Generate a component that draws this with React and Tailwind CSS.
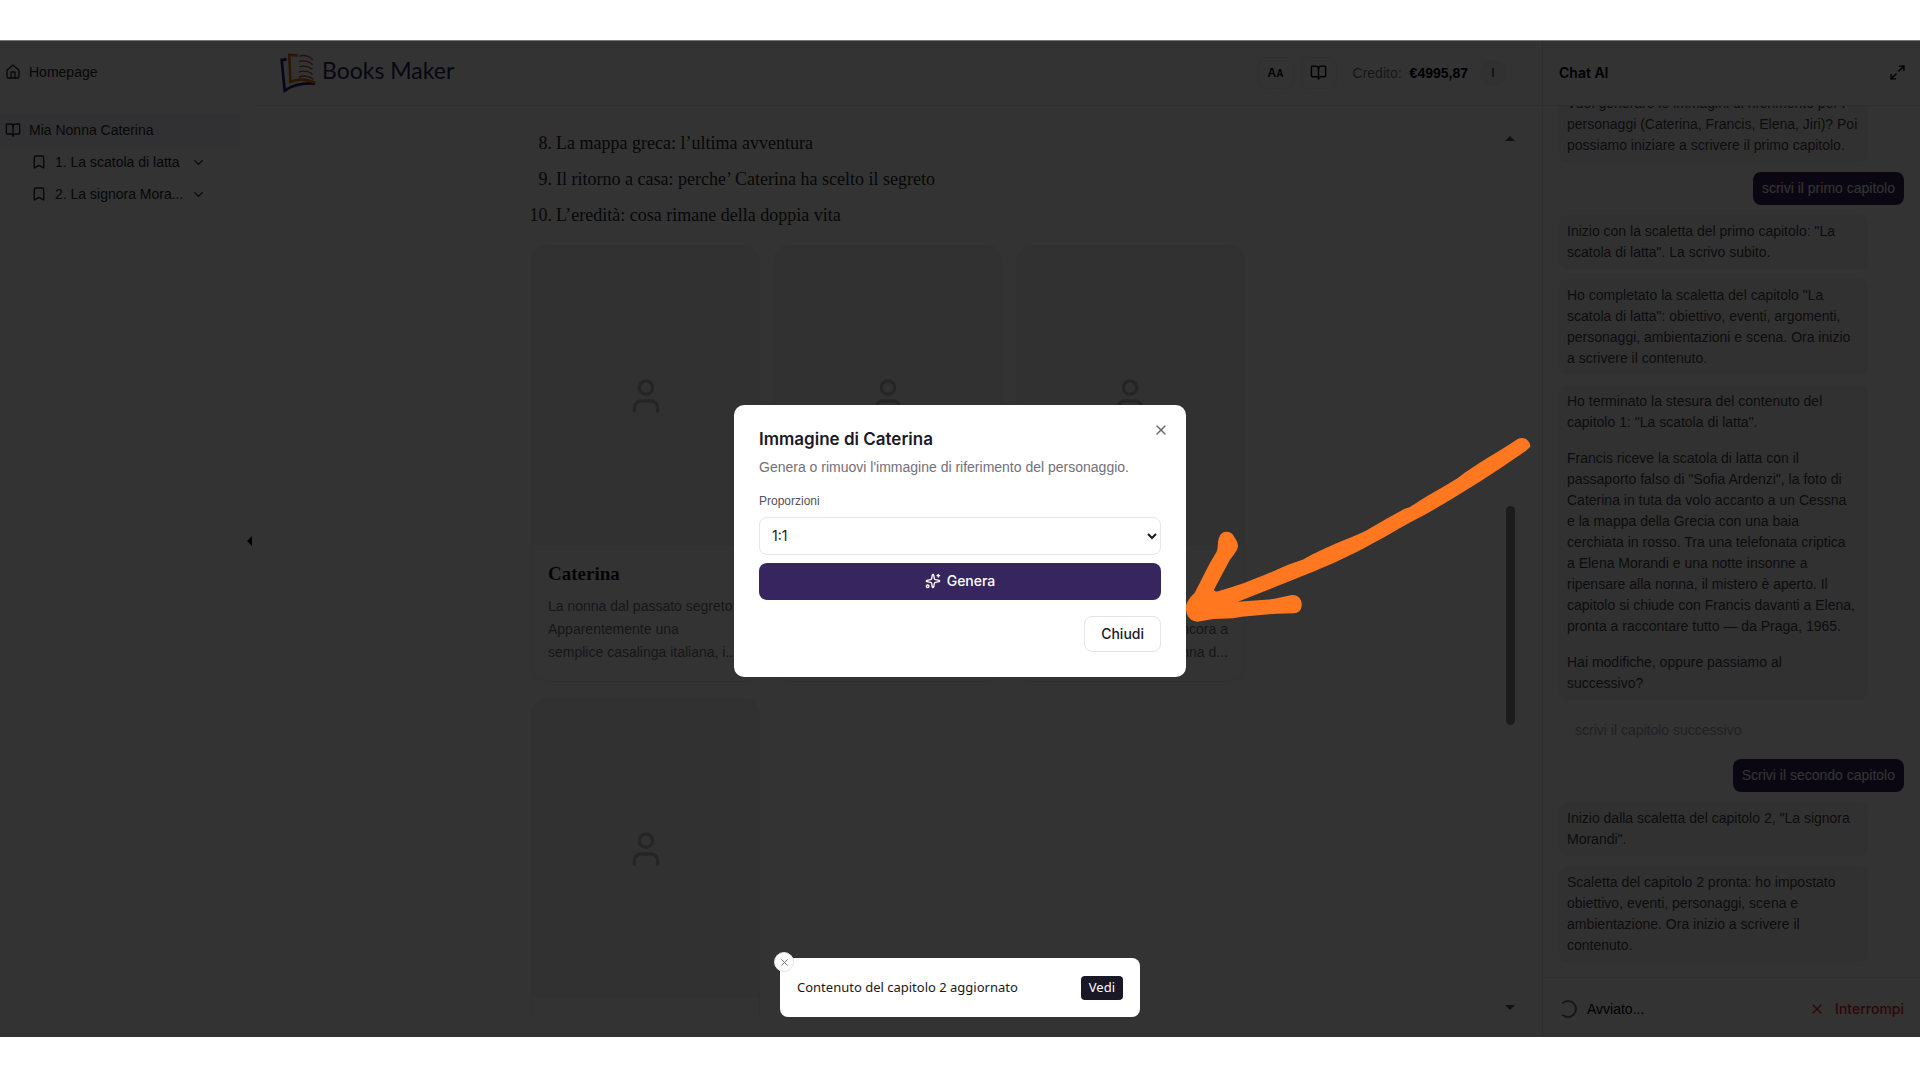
import {
  BookOpen,
  Bookmark,
  ChevronDown,
  House,
  Maximize2,
  Sparkles,
  User,
  X,
} from "lucide-react";

const chapters = ["1. La scatola di latta", "2. La signora Mora..."];

const outline = [
  { n: 8, title: "La mappa greca: l’ultima avventura" },
  { n: 9, title: "Il ritorno a casa: perche’ Caterina ha scelto il segreto" },
  { n: 10, title: "L’eredità: cosa rimane della doppia vita" },
];

const characters = [
  {
    name: "Caterina",
    text: "La nonna dal passato segreto.\nApparentemente una\nsemplice casalinga italiana, i...",
  },
  { name: "", text: "" },
  { name: "", text: "\nancora a\nnonna d...", right: true },
  { name: "", text: "" },
];

const messages = [
  {
    from: "ai",
    parts: [
      "Vuoi generare le immagini di riferimento per i\npersonaggi (Caterina, Francis, Elena, Jiri)? Poi\npossiamo iniziare a scrivere il primo capitolo.",
    ],
  },
  { from: "user", parts: ["scrivi il primo capitolo"] },
  {
    from: "ai",
    parts: ['Inizio con la scaletta del primo capitolo: "La\nscatola di latta". La scrivo subito.'],
  },
  {
    from: "ai",
    parts: [
      'Ho completato la scaletta del capitolo "La\nscatola di latta": obiettivo, eventi, argomenti,\npersonaggi, ambientazioni e scena. Ora inizio\na scrivere il contenuto.',
    ],
  },
  {
    from: "ai",
    parts: [
      'Ho terminato la stesura del contenuto del\ncapitolo 1: "La scatola di latta".',
      'Francis riceve la scatola di latta con il\npassaporto falso di "Sofia Ardenzi", la foto di\nCaterina in tuta da volo accanto a un Cessna\ne la mappa della Grecia con una baia\ncerchiata in rosso. Tra una telefonata criptica\na Elena Morandi e una notte insonne a\nripensare alla nonna, il mistero è aperto. Il\ncapitolo si chiude con Francis davanti a Elena,\npronta a raccontare tutto — da Praga, 1965.',
      "Hai modifiche, oppure passiamo al\nsuccessivo?",
    ],
  },
  { from: "hint", parts: ["scrivi il capitolo successivo"] },
  { from: "user", parts: ["Scrivi il secondo capitolo"] },
  {
    from: "ai",
    parts: ['Inizio dalla scaletta del capitolo 2, "La signora\nMorandi".'],
  },
  {
    from: "ai",
    parts: [
      "Scaletta del capitolo 2 pronta: ho impostato\nobiettivo, eventi, personaggi, scena e\nambientazione. Ora inizio a scrivere il\ncontenuto.",
    ],
  },
];

const Logo = () => (
  <a href="#" className="flex items-start gap-1">
    <svg viewBox="0 0 114 126" className="w-[38px] h-[42px]" fill="none">
      <path d="M20 22 L5 24 L14 116 C40 98 70 92 106 95" stroke="#2b1a78" strokeWidth="8" />
      <path d="M54 10 L28 9 L31 90 C54 80 82 82 106 93" stroke="#d97706" strokeWidth="8" />
      <path
        d="M58 12 C76 8 90 14 98 24 M58 28 C76 24 90 30 98 38 M58 44 C76 40 90 46 98 52 M56 60 C76 54 90 60 98 68 M56 76 C74 68 90 74 100 82"
        stroke="#c2415a"
        strokeWidth="4"
      />
    </svg>
    <span className="font-['Lato',sans-serif] text-[23px] leading-9 text-[#2a2455]">
      Books Maker
    </span>
  </a>
);

const Sidebar = () => (
  <nav className="w-[258px] shrink-0 relative flex flex-col bg-[#fcfcfc] text-sm text-[#27272a]">
    <a href="#" className="flex items-center gap-2 h-8 mt-4 px-[5px]">
      <House size={16} />
      Homepage
    </a>
    <a href="#" className="flex items-center gap-2 h-8 mt-[26px] mr-[18px] px-[5px] bg-[#f6f6fc]">
      <BookOpen size={16} />
      Mia Nonna Caterina
    </a>
    {chapters.map((c) => (
      <a href="#" key={c} className="flex items-center gap-2 h-8 pl-[31px]">
        <Bookmark size={16} />
        <span className="w-[128px] whitespace-nowrap">{c}</span>
        <ChevronDown size={15} />
      </a>
    ))}
    <button
      aria-label="Chiudi menu"
      className="absolute right-[6px] top-1/2 -mt-[3px] border-y-[5px] border-y-transparent border-r-[5px] border-r-black"
    />
  </nav>
);

const Header = () => (
  <header className="h-[66px] shrink-0 flex items-center pl-[22px] pr-9 border-b border-[#e4e4e7]">
    <Logo />
    <div className="ml-auto flex items-center text-sm">
      <button className="w-9 h-8 rounded-lg border border-[#eeeeee] text-xs font-bold">
        A<span className="text-[10px]">A</span>
      </button>
      <button
        aria-label="Leggi"
        className="w-9 h-8 ml-[7px] rounded-lg border border-[#eeeeee] flex items-center justify-center"
      >
        <BookOpen size={17} />
      </button>
      <span className="ml-4 text-[#71717a]">Credito:</span>
      <strong className="ml-2 font-semibold">€4995,87</strong>
      <button className="ml-3 w-[26px] h-[26px] rounded-full bg-[#f4f4f5] text-xs">I</button>
    </div>
  </header>
);

const CharacterCard = ({ name, text, right }) => (
  <article className="rounded-2xl border border-[#eeeeee] overflow-hidden">
    <div className="h-[299px] bg-[#f6f6f7] flex items-center justify-center">
      <User size={40} className="text-[#b8b8bd]" />
    </div>
    <div className="px-4 pt-[15px] h-[136px]">
      <h3 className="h-7 font-['Liberation_Serif',serif] font-bold text-[19px] leading-7 text-[#18181b]">
        {name}
      </h3>
      <p
        className={`mt-[7px] text-sm leading-[23px] text-[#71717a] whitespace-pre ${right ? "text-right" : ""}`}
      >
        {text}
      </p>
    </div>
  </article>
);

const Page = () => (
  <div className="flex-1 min-h-0 flex pr-6 pt-6 pb-[21px]">
    <div className="flex-1 overflow-hidden">
      <div className="w-[714px] ml-[273px]">
        <ol className="font-['Liberation_Serif',serif] text-[18px] text-[#27272a]">
          {outline.map(({ n, title }) => (
            <li key={n} className="flex gap-1 h-9 items-center -ml-[7px] first:-mt-[5px]">
              <span className="w-7 text-right">{n}.</span>
              {title}
            </li>
          ))}
        </ol>
        <div className="grid grid-cols-3 gap-x-[13px] gap-y-4 mt-3">
          {characters.map((c, i) => (
            <CharacterCard key={i} {...c} />
          ))}
        </div>
      </div>
    </div>
    <div className="w-4 flex flex-col items-center justify-between py-[6px]">
      <span className="border-x-[5px] border-x-transparent border-b-[5px] border-b-[#555]" />
      <span className="w-[9px] h-[219px] rounded-full bg-[#8c8c8c] mt-[84px]" />
      <span className="border-x-[5px] border-x-transparent border-t-[5px] border-t-[#555]" />
    </div>
  </div>
);

const bubble = {
  ai: "self-start w-[309px] px-2 py-[6px] rounded-lg bg-[#f6f6f7] text-[#3f3f46]",
  user: "self-end px-[9px] py-[6px] rounded-lg bg-[#36255f] text-white",
  hint: "self-start px-4 pt-[10px] pb-2 text-[#a1a1aa]",
};

const Chat = () => (
  <aside className="w-[378px] shrink-0 flex flex-col border-l border-[#e4e4e7] text-sm">
    <div className="h-[66px] shrink-0 flex items-center justify-between pl-4 pr-[14px] border-b border-[#e4e4e7]">
      <h2 className="font-['Inter',sans-serif] font-semibold">Chat AI</h2>
      <button aria-label="Espandi">
        <Maximize2 size={17} />
      </button>
    </div>
    <div className="flex-1 min-h-0 overflow-hidden flex flex-col justify-end gap-[10px] px-4 pb-[15px]">
      {messages.map((m, i) => (
        <div key={i} className={`shrink-0 flex flex-col gap-[15px] leading-[21px] whitespace-pre ${bubble[m.from]}`}>
          {m.parts.map((p) => (
            <p key={p}>{p}</p>
          ))}
        </div>
      ))}
    </div>
    <div className="h-[60px] shrink-0 flex items-center px-4 pt-[2px] border-t border-[#e4e4e7]">
      <span className="w-[18px] h-[18px] rounded-full border-2 border-[#71717a] border-l-transparent" />
      <span className="ml-[10px]">Avviato...</span>
      <button className="ml-auto flex items-center gap-[10px] font-['Inter',sans-serif] font-medium text-[#dc2626]">
        <X size={16} />
        Interrompi
      </button>
    </div>
  </aside>
);

const Arrow = () => (
  <svg
    viewBox="70 105 1050 565"
    className="absolute left-full -ml-[3px] top-[30px] w-[350px] h-[188px] pointer-events-none"
    fill="#ff781f"
  >
    <path d="M1075 117 C1093 108 1112 120 1113 140 L1100 152 C1000 222 900 285 790 348 C740 372 690 405 640 430 C560 475 480 508 400 540 L234 606 L340 598 L396 586 C414 584 426 598 426 614 C426 632 416 641 402 641 L350 642 L245 651 L220 656 L160 658 L112 666 C92 664 80 650 79 634 C74 620 82 600 104 580 L150 490 L170 456 C176 440 172 424 178 412 C184 392 212 390 221 408 C228 420 236 430 234 442 C228 460 216 470 209 482 L164 566 C160 574 164 576 172 575 C240 558 310 528 385 495 L430 479 C500 440 560 420 620 392 C660 370 700 345 735 327 L750 322 C800 288 850 262 895 234 C950 192 1010 160 1075 117 Z" />
  </svg>
);

const ImageDialog = () => (
  <div
    role="dialog"
    aria-labelledby="dialog-title"
    className="relative w-[452px] rounded-[10px] bg-white px-[25px] pt-5 pb-[25px] text-sm text-[#1b1828]"
  >
    <button aria-label="Chiudi finestra" className="absolute right-[17px] top-[17px] text-[#666]">
      <X size={16} />
    </button>
    <h2
      id="dialog-title"
      className="font-['Inter',sans-serif] text-[17px] leading-7 font-semibold"
    >
      Immagine di Caterina
    </h2>
    <p className="mt-1 leading-5 text-[#71717a]">
      Genera o rimuovi l'immagine di riferimento del personaggio.
    </p>
    <label htmlFor="ratio" className="block mt-4 text-xs leading-4 text-[#52525b]">
      Proporzioni
    </label>
    <select
      id="ratio"
      defaultValue="1:1"
      className="mt-2 w-full h-[38px] pl-2 rounded-lg border border-[#e4e4e7] bg-white font-['Inter',sans-serif]"
    >
      <option>1:1</option>
    </select>
    <button className="mt-2 w-full h-[37px] rounded-lg bg-[#36255f] text-white font-['Inter',sans-serif] font-medium flex items-center justify-center gap-[6px]">
      <Sparkles size={16} />
      Genera
    </button>
    <div className="flex justify-end mt-4">
      <button className="h-9 px-4 rounded-lg border border-[#e4e4e7] font-['Inter',sans-serif] font-medium">
        Chiudi
      </button>
    </div>
    <Arrow />
  </div>
);

const Toast = () => (
  <div className="absolute bottom-5 left-1/2 -translate-x-1/2 w-[360px] h-[59px] px-[17px] rounded-lg bg-white flex items-center justify-between font-['Noto_Sans',sans-serif] text-[13px] text-[#18181b]">
    <button
      aria-label="Chiudi notifica"
      className="absolute -left-[6px] -top-[6px] w-5 h-5 rounded-full bg-white border border-[#e4e4e7] flex items-center justify-center text-[#666]"
    >
      <X size={11} />
    </button>
    Contenuto del capitolo 2 aggiornato
    <button className="h-6 px-2 rounded bg-[#1a1726] text-white">Vedi</button>
  </div>
);

const App = () => {
  return (
    <div className="h-screen flex flex-col pt-10 pb-[43px] bg-white font-['Liberation_Sans',sans-serif]">
      <div className="relative flex-1 min-h-0 flex overflow-hidden">
        <Sidebar />
        <main className="flex-1 min-w-0 flex flex-col">
          <Header />
          <Page />
        </main>
        <Chat />
        <div className="absolute inset-0 bg-black/80 border-t border-[#777]" />
        <div className="absolute inset-0 pt-1 flex items-center justify-center">
          <ImageDialog />
        </div>
        <Toast />
      </div>
    </div>
  );
};

export default App;
